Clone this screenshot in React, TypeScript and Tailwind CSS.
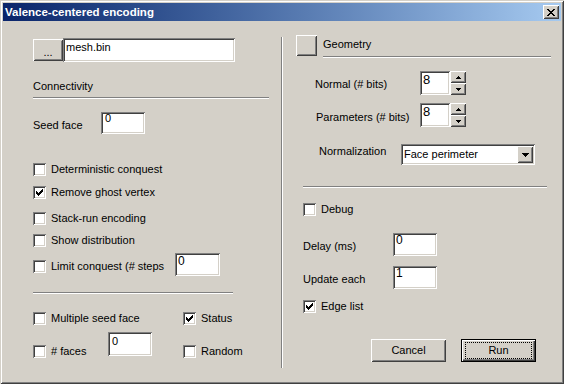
import React from "react";

// Win2000 3D frames drawn with stacked inset shadows
const SUNKEN =
  "shadow-[inset_1px_1px_#808080,inset_-1px_-1px_#ffffff,inset_2px_2px_#404040,inset_-2px_-2px_#d4d0c8]";
const RAISED =
  "shadow-[inset_1px_1px_#ffffff,inset_-1px_-1px_#404040,inset_2px_2px_#d4d0c8,inset_-2px_-2px_#808080]";

function Check({ on = false }: { on?: boolean }) {
  return (
    <div className={`relative h-[13px] w-[13px] shrink-0 bg-white ${SUNKEN}`}>
      {on && (
        <svg
          className="absolute left-[3px] top-[3px]"
          width="7"
          height="7"
          viewBox="0 0 7 7"
          shapeRendering="crispEdges"
        >
          <path
            d="M6 0h1v1H6zM5 1h2v1H5zM0 2h1v1H0zM4 2h3v1H4zM0 3h2v1H0zM3 3h3v1H3zM0 4h5v1H0zM1 5h3v1H1zM2 6h1v1H2z"
            fill="#000"
          />
        </svg>
      )}
    </div>
  );
}

function CheckRow({ label, on = false, className = "" }: { label: string; on?: boolean; className?: string }) {
  return (
    <div className={`flex items-center gap-[5px] ${className}`}>
      <Check on={on} />
      <span className="whitespace-nowrap">{label}</span>
    </div>
  );
}

function Edit({ value, className }: { value: string; className: string }) {
  return <div className={`shrink-0 bg-white ${SUNKEN} ${className}`}>{value}</div>;
}

function Rule({ className }: { className: string }) {
  return <div className={`h-[2px] border-t border-b border-t-[#808080] border-b-white ${className}`} />;
}

function Arrow({ dir }: { dir: "up" | "down" }) {
  return (
    <svg width="5" height="3" viewBox="0 0 5 3" shapeRendering="crispEdges">
      <path d={dir === "up" ? "M2 0h1v1H2zM1 1h3v1H1zM0 2h5v1H0z" : "M0 0h5v1H0zM1 1h3v1H1zM2 2h1v1H2z"} fill="#000" />
    </svg>
  );
}

function Spinner() {
  return (
    <div className="flex h-[24px] w-[16px] flex-col">
      <div className={`flex h-[12px] items-center justify-center bg-[#d4d0c8] ${RAISED}`}>
        <Arrow dir="up" />
      </div>
      <div className={`flex h-[12px] items-center justify-center bg-[#d4d0c8] ${RAISED}`}>
        <Arrow dir="down" />
      </div>
    </div>
  );
}

export default function App() {
  return (
    <div className="relative flex h-[384px] w-[564px] flex-col bg-[#d4d0c8] p-[3px] font-['Liberation_Sans',Arial,sans-serif] text-[11px] leading-[13px] text-black shadow-[inset_1px_1px_#d4d0c8,inset_-1px_-1px_#404040,inset_2px_2px_#ffffff,inset_-2px_-2px_#808080]">
      {/* title bar */}
      <div className="flex h-[18px] shrink-0 items-center justify-between bg-linear-to-r from-[#0a246a] to-[#a6caf0] pl-[2px] pr-[2px]">
        <span className="text-[11.5px] font-bold text-white">Valence-centered encoding</span>
        <div className={`flex h-[14px] w-[16px] items-center justify-center bg-[#d4d0c8] ${RAISED}`}>
          <svg width="8" height="7" viewBox="0 0 8 7" shapeRendering="crispEdges">
            <path
              d="M0 0h2v1H0zM6 0h2v1H6zM1 1h2v1H1zM5 1h2v1H5zM2 2h4v1H2zM3 3h2v1H3zM2 4h4v1H2zM1 5h2v1H1zM5 5h2v1H5zM0 6h2v1H0zM6 6h2v1H6z"
              fill="#000"
            />
          </svg>
        </div>
      </div>

      <div className="flex flex-1">
        {/* connectivity column */}
        <div className="flex w-[278px] shrink-0 flex-col pl-[30px] pt-[17px]">
          <div className="flex h-[24px] items-center">
            <div className={`flex h-[22px] w-[30px] items-center justify-center bg-[#d4d0c8] pt-[4px] ${RAISED}`}>...</div>
            <Edit value="mesh.bin" className="h-[24px] w-[172px] pl-[3px] pt-[3px]" />
          </div>

          <div className="mt-[18px]">Connectivity</div>
          <Rule className="mt-[4px] w-[236px]" />

          <div className="mt-[13px] flex items-start">
            <span className="mt-[7px] w-[68px]">Seed face</span>
            <Edit value="0" className="h-[22px] w-[44px] pl-[4px] pt-0" />
          </div>

          <CheckRow className="mt-[29px]" label="Deterministic conquest" />
          <CheckRow className="mt-[10px]" label="Remove ghost vertex" on />
          <CheckRow className="mt-[13px]" label="Stack-run encoding" />
          <CheckRow className="mt-[9px]" label="Show distribution" />

          <div className="mt-[6px] flex items-start">
            <CheckRow className="mt-[7px] w-[142px]" label="Limit conquest (# steps" />
            <Edit value="0" className="h-[23px] w-[45px] pl-[3px] pt-[2px] text-[12px]" />
          </div>

          <Rule className="mt-[16px] w-[200px]" />

          <div className="mt-[18px] flex">
            <CheckRow className="w-[150px]" label="Multiple seed face" />
            <CheckRow label="Status" on />
          </div>

          <div className="mt-[7px] flex items-start">
            <CheckRow className="mt-[13px] w-[75px]" label="# faces" />
            <Edit value="0" className="h-[24px] w-[44px] pl-[4px] pt-[3px]" />
            <CheckRow className="ml-[31px] mt-[13px]" label="Random" />
          </div>
        </div>

        <div className="mt-[16px] h-[331px] w-[2px] shrink-0 border-l border-r border-l-[#808080] border-r-white" />

        {/* geometry column */}
        <div className="flex flex-1 flex-col pl-[13px] pt-[14px]">
          <div className="flex">
            <div className={`h-[21px] w-[21px] shrink-0 bg-[#d4d0c8] ${RAISED}`} />
            <div className="ml-[6px] flex h-[23px] w-[228px] flex-col justify-between">
              <span className="pt-[3px]">Geometry</span>
              <Rule className="w-full" />
            </div>
          </div>

          <div className="ml-[19px] mt-[13px] flex items-start">
            <span className="mt-[7px] w-[105px]">Normal (# bits)</span>
            <Edit value="8" className="h-[24px] w-[30px] pl-[3px] pt-[1px] text-[13px] leading-[15px]" />
            <Spinner />
          </div>

          <div className="ml-[20px] mt-[8px] flex items-start">
            <span className="mt-[8px] w-[104px]">Parameters (# bits)</span>
            <Edit value="8" className="h-[24px] w-[30px] pl-[3px] pt-[1px] text-[13px] leading-[15px]" />
            <Spinner />
          </div>

          <div className="ml-[23px] mt-[17px] flex items-start">
            <span className="mt-[1px] w-[82px]">Normalization</span>
            <div className={`flex h-[21px] w-[134px] items-start justify-between bg-white p-[2px] ${SUNKEN}`}>
              <span className="pl-[1px] pt-[2px]">Face perimeter</span>
              <div className={`flex h-[17px] w-[16px] items-center justify-center bg-[#d4d0c8] ${RAISED}`}>
                <svg width="7" height="4" viewBox="0 0 7 4" shapeRendering="crispEdges">
                  <path d="M0 0h7v1H0zM1 1h5v1H1zM2 2h3v1H2zM3 3h1v1H3z" fill="#000" />
                </svg>
              </div>
            </div>
          </div>

          <Rule className="ml-[7px] mt-[21px] w-[244px]" />

          <CheckRow className="ml-[7px] mt-[15px]" label="Debug" />

          <div className="ml-[7px] mt-[17px] flex items-start">
            <span className="mt-[7px] w-[90px]">Delay (ms)</span>
            <Edit value="0" className="h-[23px] w-[44px] pl-[3px] pt-[1px] text-[12px]" />
          </div>

          <div className="ml-[7px] mt-[10px] flex items-start">
            <span className="mt-[7px] w-[90px]">Update each</span>
            <Edit value="1" className="h-[23px] w-[44px] pl-[3px] pt-[1px] text-[12px]" />
          </div>

          <CheckRow className="ml-[7px] mt-[11px]" label="Edge list" on />

          <div className="ml-[75px] mt-[26px] flex">
            <div className={`flex h-[23px] w-[75px] items-center justify-center bg-[#d4d0c8] ${RAISED}`}>
              Cancel
            </div>
            <div className="relative ml-[15px] flex h-[23px] w-[75px] items-center justify-center border border-black bg-[#d4d0c8] shadow-[inset_1px_1px_#ffffff,inset_-1px_-1px_#404040,inset_-2px_-2px_#808080]">
              Run
              <div className="absolute inset-x-[3px] inset-y-[2px] border border-dotted border-black" />
            </div>
          </div>
        </div>
      </div>
    </div>
  );
}
